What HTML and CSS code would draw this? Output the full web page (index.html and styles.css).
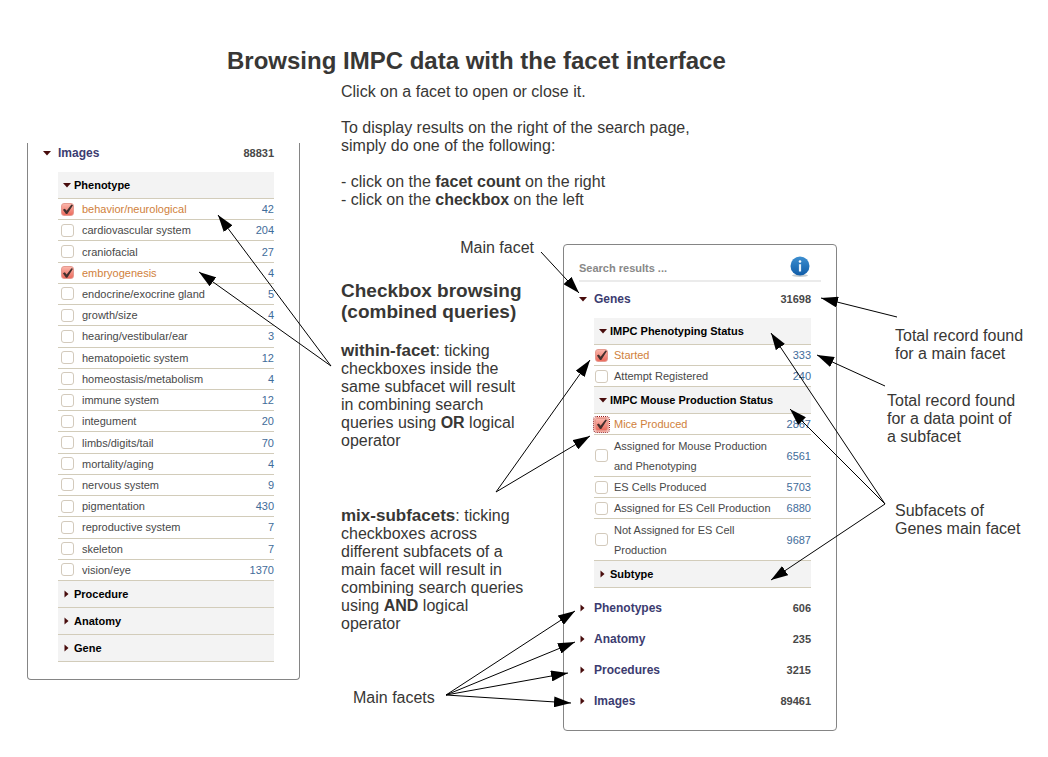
FILE: index.html
```html
<!DOCTYPE html>
<html lang="en">
<head>
<meta charset="utf-8">
<title>Browsing IMPC data with the facet interface</title>
<link rel="stylesheet" href="styles.css">
</head>
<body>
<svg class="defs" aria-hidden="true">
  <symbol id="down" viewBox="0 0 8 8"><path d="M0 2h8L4 6.5z"/></symbol>
  <symbol id="right" viewBox="0 0 8 8"><path d="M1.500 0.500v7L5.500 4z"/></symbol>
</svg>
<main class="page">
  <h1 class="title">Browsing IMPC data with the facet interface</h1>
  <div class="layout">
    <section class="panel panel-images">
      <div class="facet"><button class="facet-name" type="button"><svg class="tri"><use href="#down"/></svg>Images</button><a class="total" href="#images">88831</a></div>
      <div class="body">
        <button class="sub" type="button"><svg class="tri"><use href="#down"/></svg>Phenotype</button>
        <ul class="rows rows-images">
          <li><input type="checkbox" id="p1" checked><label for="p1">behavior/neurological</label><a href="#p1">42</a></li>
          <li><input type="checkbox" id="p2"><label for="p2">cardiovascular system</label><a href="#p2">204</a></li>
          <li><input type="checkbox" id="p3"><label for="p3">craniofacial</label><a href="#p3">27</a></li>
          <li><input type="checkbox" id="p4" checked><label for="p4">embryogenesis</label><a href="#p4">4</a></li>
          <li><input type="checkbox" id="p5"><label for="p5">endocrine/exocrine gland</label><a href="#p5">5</a></li>
          <li><input type="checkbox" id="p6"><label for="p6">growth/size</label><a href="#p6">4</a></li>
          <li><input type="checkbox" id="p7"><label for="p7">hearing/vestibular/ear</label><a href="#p7">3</a></li>
          <li><input type="checkbox" id="p8"><label for="p8">hematopoietic system</label><a href="#p8">12</a></li>
          <li><input type="checkbox" id="p9"><label for="p9">homeostasis/metabolism</label><a href="#p9">4</a></li>
          <li><input type="checkbox" id="p10"><label for="p10">immune system</label><a href="#p10">12</a></li>
          <li><input type="checkbox" id="p11"><label for="p11">integument</label><a href="#p11">20</a></li>
          <li><input type="checkbox" id="p12"><label for="p12">limbs/digits/tail</label><a href="#p12">70</a></li>
          <li><input type="checkbox" id="p13"><label for="p13">mortality/aging</label><a href="#p13">4</a></li>
          <li><input type="checkbox" id="p14"><label for="p14">nervous system</label><a href="#p14">9</a></li>
          <li><input type="checkbox" id="p15"><label for="p15">pigmentation</label><a href="#p15">430</a></li>
          <li><input type="checkbox" id="p16"><label for="p16">reproductive system</label><a href="#p16">7</a></li>
          <li><input type="checkbox" id="p17"><label for="p17">skeleton</label><a href="#p17">7</a></li>
          <li><input type="checkbox" id="p18"><label for="p18">vision/eye</label><a href="#p18">1370</a></li>
        </ul>
        <button class="sub" type="button"><svg class="tri"><use href="#right"/></svg>Procedure</button>
        <button class="sub" type="button"><svg class="tri"><use href="#right"/></svg>Anatomy</button>
        <button class="sub" type="button"><svg class="tri"><use href="#right"/></svg>Gene</button>
      </div>
    </section>

    <div class="intro">
      <p>Click on a facet to open or close it.</p>
      <p>To display results on the right of the search page,<br>simply do one of the following:</p>
      <p>- click on the <b>facet count</b> on the right<br>- click on the <b>checkbox</b> on the left</p>
    </div>

    <div class="guide">
      <p class="note-main">Main facet</p>
      <h2>Checkbox browsing<br>(combined queries)</h2>
      <p><span class="lead"><b>within-facet</b>: ticking</span>checkboxes inside the<br>same subfacet will result<br>in combining search<br>queries using <b>OR</b> logical<br>operator</p>
      <p class="spaced"><span class="lead"><b>mix-subfacets</b>: ticking</span>checkboxes across<br>different subfacets of a<br>main facet will result in<br>combining search queries<br>using <b>AND</b> logical<br>operator</p>
      <p class="spaced note-facets">Main facets</p>
    </div>

    <section class="panel panel-search">
      <header class="search-head">
        <span>Search results ...</span>
        <button class="info" type="button" aria-label="Information">
          <svg viewBox="0 0 20 22">
            <defs><linearGradient id="blue" x1="0" y1="0" x2="0" y2="1"><stop offset="0" stop-color="#3d8fd0"/><stop offset="1" stop-color="#0f5ca8"/></linearGradient></defs>
            <ellipse cx="10" cy="19.500" rx="8" ry="1.500" fill="#c4ccd0"/>
            <circle cx="10" cy="10" r="9.500" fill="url(#blue)"/>
            <circle cx="10" cy="5.500" r="1.300" fill="#fff"/>
            <path d="M8.900 8.200h2.200V15.500H8.900z" fill="#e8f3fb"/>
          </svg>
        </button>
      </header>
      <div class="facet"><button class="facet-name" type="button"><svg class="tri"><use href="#down"/></svg>Genes</button><a class="total" href="#genes">31698</a></div>
      <div class="body">
        <button class="sub" type="button"><svg class="tri"><use href="#down"/></svg>IMPC Phenotyping Status</button>
        <ul class="rows">
          <li><input type="checkbox" id="g1" checked><label for="g1">Started</label><a href="#g1">333</a></li>
          <li><input type="checkbox" id="g2"><label for="g2">Attempt Registered</label><a href="#g2">240</a></li>
        </ul>
        <button class="sub" type="button"><svg class="tri"><use href="#down"/></svg>IMPC Mouse Production Status</button>
        <ul class="rows">
          <li><input class="focused" type="checkbox" id="g3" checked><label for="g3">Mice Produced</label><a href="#g3">2867</a></li>
          <li class="tall"><input type="checkbox" id="g4"><label for="g4">Assigned for Mouse Production<br>and Phenotyping</label><a href="#g4">6561</a></li>
          <li><input type="checkbox" id="g5"><label for="g5">ES Cells Produced</label><a href="#g5">5703</a></li>
          <li><input type="checkbox" id="g6"><label for="g6">Assigned for ES Cell Production</label><a href="#g6">6880</a></li>
          <li class="tall"><input type="checkbox" id="g7"><label for="g7">Not Assigned for ES Cell<br>Production</label><a href="#g7">9687</a></li>
        </ul>
        <button class="sub" type="button"><svg class="tri"><use href="#right"/></svg>Subtype</button>
      </div>
      <div class="closed">
        <div class="facet"><button class="facet-name" type="button"><svg class="tri"><use href="#right"/></svg>Phenotypes</button><a class="total" href="#phenotypes">606</a></div>
        <div class="facet"><button class="facet-name" type="button"><svg class="tri"><use href="#right"/></svg>Anatomy</button><a class="total" href="#anatomy">235</a></div>
        <div class="facet"><button class="facet-name" type="button"><svg class="tri"><use href="#right"/></svg>Procedures</button><a class="total" href="#procedures">3215</a></div>
        <div class="facet"><button class="facet-name" type="button"><svg class="tri"><use href="#right"/></svg>Images</button><a class="total" href="#all-images">89461</a></div>
      </div>
    </section>

    <aside class="notes">
      <p>Total record found<br>for a main facet</p>
      <p class="near">Total record found<br>for a data point of<br>a subfacet</p>
      <p class="last">Subfacets of<br>Genes main facet</p>
    </aside>
  </div>

  <svg class="arrows" viewBox="0 0 1048 757" preserveAspectRatio="none" aria-hidden="true">
    <defs><marker id="head" viewBox="0 0 17 11" markerWidth="17" markerHeight="11" refX="17" refY="5.500" orient="auto" markerUnits="userSpaceOnUse"><path d="M0 0L17 5.500L0 11z"/></marker></defs>
    <path d="M331 366L218 215"/>
    <path d="M331 366L199 272"/>
    <path d="M541 252L579 293"/>
    <path d="M496 492L590 360"/>
    <path d="M496 492L590 436"/>
    <path d="M897 317L821 298"/>
    <path d="M885 386L817 355"/>
    <path d="M885 504L771 333"/>
    <path d="M885 504L790 409"/>
    <path d="M885 504L771 580"/>
    <path d="M446 695L575 611"/>
    <path d="M446 695L575 642"/>
    <path d="M446 695L568 673"/>
    <path d="M446 695L571 703"/>
  </svg>
</main>
</body>
</html>
```
FILE: styles.css
```css
* { box-sizing: border-box; }

body {
  margin: 0;
  background: #fff;
  color: #383735;
  font: 16px/18px "Liberation Sans", Arial, sans-serif;
}

p, h1, h2, ul { margin: 0; padding: 0; }
a { text-decoration: none; }

button {
  margin: 0;
  padding: 0;
  border: 0;
  background: none;
  color: inherit;
  font: inherit;
  text-align: left;
  cursor: pointer;
}

.defs { display: none; }

.page {
  position: relative;
  padding: 47px 0 24px 27px;
}

.title {
  margin-bottom: 8px;
  padding-left: 200px;
  font-size: 24px;
  line-height: 28px;
}

.layout {
  display: grid;
  grid-template-columns: 273fr 263fr 274fr 211fr;
  align-items: start;
}

/* Panels */
.panel {
  border: 1px solid #858585;
  border-radius: 4px;
  font-size: 11px;
}

.panel-images {
  grid-row: 1 / 3;
  margin-top: 60px;
  padding-bottom: 17px;
  border-top: 0;
  border-radius: 0 0 4px 4px;
}

.panel-search {
  margin-top: 5px;
  padding-bottom: 14px;
}

.search-head {
  display: flex;
  justify-content: space-between;
  align-items: center;
  height: 37px;
  margin: 0 15px 7px;
  padding: 11px 11px 0 0;
  border-bottom: 2px solid #ebebeb;
  color: #888;
  font-weight: bold;
}

.info { align-self: flex-start; height: 22px; }
.info svg { display: block; width: 20px; height: 22px; }

.facet {
  display: flex;
  justify-content: space-between;
  align-items: center;
  height: 20px;
  padding: 0 25px 0 15px;
  font-weight: bold;
}

.facet-name {
  display: flex;
  align-items: center;
  gap: 7px;
  color: #3c3c70;
  font-size: 12px;
}

.total { color: #484848; }

.tri {
  width: 8px;
  height: 8px;
  fill: #480c0c;
}

.body { margin: 9px 25px 0 30px; }

.sub {
  display: flex;
  align-items: center;
  gap: 3px;
  width: 100%;
  height: 27px;
  padding-left: 5px;
  border-bottom: 1px solid #d2ccba;
  background: #f3f3f3;
  color: #000;
  font-weight: bold;
}

.rows {
  list-style: none;
  line-height: 20px;
}

.rows-images {
  display: grid;
  grid-auto-rows: 1fr;
  min-height: 382px;
}

.rows li {
  display: flex;
  align-items: center;
  min-height: 21px;
  padding-left: 1px;
  border-bottom: 1px solid #d2ccba;
}

.rows-images li { padding-left: 3px; }
.rows .tall { min-height: 42px; }

.rows label { flex: 1; color: #484848; }
.rows a { color: #3f6c9a; }

.rows input {
  position: relative;
  flex: none;
  width: 13px;
  height: 13px;
  margin: 0 6px 0 0;
  border: 1px solid #d3cabc;
  border-radius: 3px;
  background: #fff;
  appearance: none;
}

.rows-images input { margin-right: 8px; }

.rows input:checked {
  border-color: #e59a90;
  background: linear-gradient(#fbb5aa, #ec6c5e);
}

.rows input:checked::before {
  content: "";
  position: absolute;
  inset: 0;
  background: #44302e;
  clip-path: polygon(8% 55%, 26% 46%, 42% 66%, 86% 8%, 100% 14%, 48% 95%, 36% 95%);
}

.rows input:checked + label { color: #d07f3c; }

.rows .focused {
  border-color: #c8564c;
  border-radius: 2px;
  outline: 1px dotted #901818;
  outline-offset: 1px;
  box-shadow: 0 0 0 1px #f5a79c;
}

.closed { margin-top: 4px; }
.closed .facet { height: 31px; }

/* Explanations */
.intro {
  grid-column: 2 / 5;
  display: grid;
  gap: 18px;
  padding: 0 0 30px 41px;
}

.guide { padding: 0 0 0 41px; }

.note-main {
  padding-right: 29px;
  text-align: right;
}

.guide h2 {
  margin: 23px 0 19px;
  font-size: 19px;
  line-height: 21px;
}

.lead { display: block; line-height: 19px; }
.lead b { font-size: 17px; }
.spaced { margin-top: 56px; }
.note-facets { padding-left: 12px; }

.notes { padding: 88px 0 0 58px; }
.notes .near { margin: 29px 0 56px -8px; }

.arrows {
  position: absolute;
  top: 0;
  left: 0;
  width: 100%;
  height: 757px;
  fill: none;
  stroke: #000;
  pointer-events: none;
}

.arrows path { marker-end: url(#head); }
.arrows marker path { fill: #000; stroke: none; marker-end: none; }
```
